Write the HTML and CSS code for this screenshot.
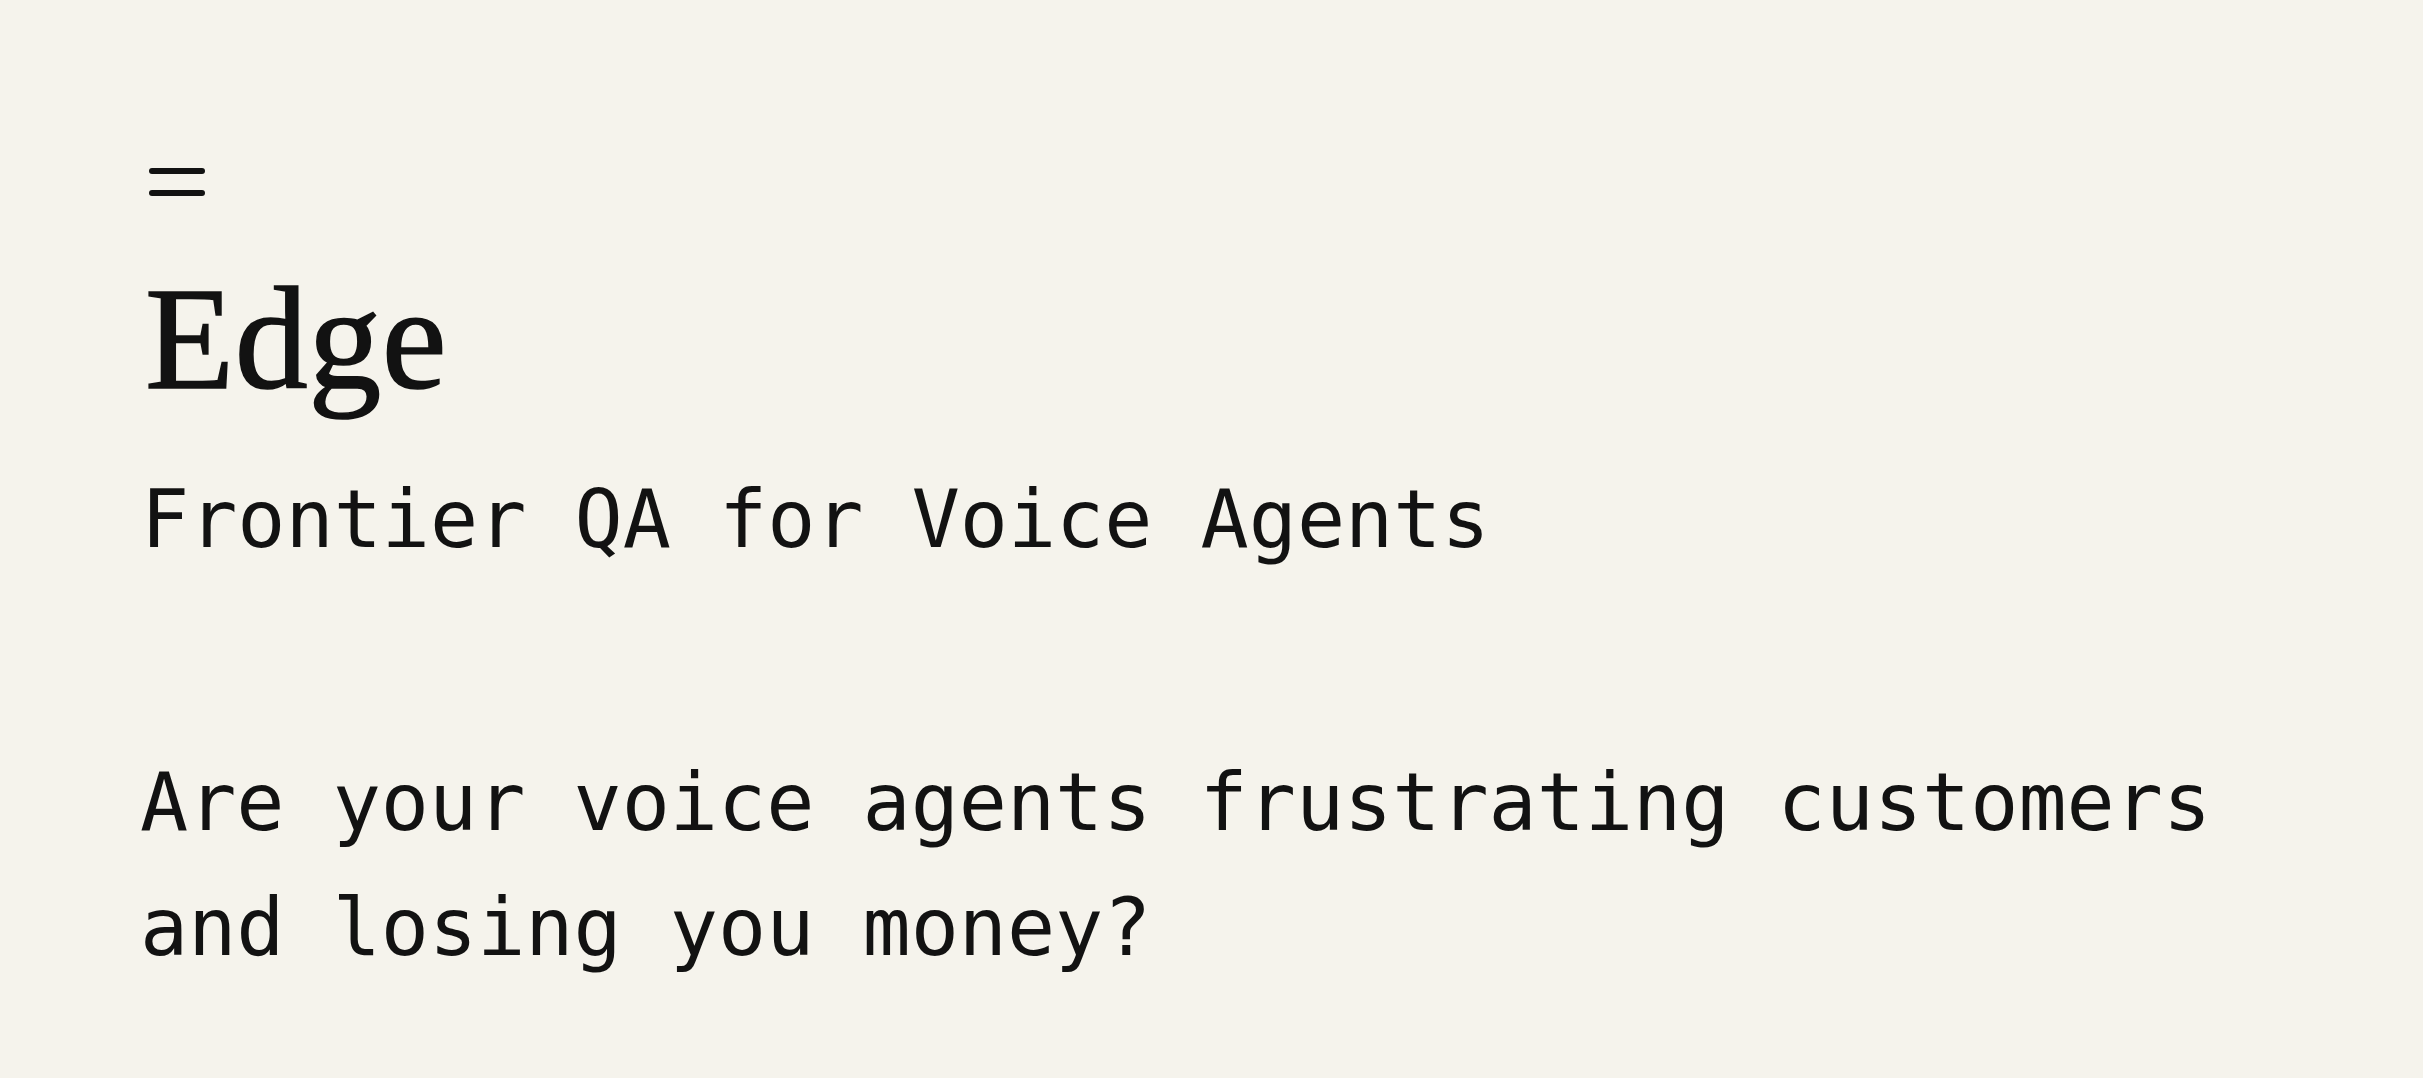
FILE: index.html
```html
<!DOCTYPE html>
<html lang="en">
<head>
<meta charset="utf-8">
<title>Edge</title>
<link rel="stylesheet" href="styles.css">
</head>
<body>
<main class="page">
  <button class="menu-btn" aria-label="Menu">
    <svg class="menu-icon" viewBox="0 0 56 32" width="56" height="32">
      <line x1="3" y1="5" x2="53" y2="5" />
      <line x1="3" y1="27" x2="53" y2="27" />
    </svg>
  </button>
  <h1 class="brand">Edge</h1>
  <p class="tagline">Frontier QA for Voice Agents</p>
  <p class="lead">Are your voice agents frustrating customers<br>and losing you money?</p>
</main>
</body>
</html>
```
FILE: styles.css
```css
html, body {
  margin: 0;
  padding: 0;
  background: #f5f3ec;
  color: #121212;
}

.page {
  padding: 166px 0 0 144px;
  display: flex;
  flex-direction: column;
  align-items: flex-start;
}

.menu-btn {
  background: none;
  border: 0;
  padding: 0;
  margin: 0 0 0 5px;
  display: block;
  line-height: 0;
}

.menu-icon line {
  stroke: #121212;
  stroke-width: 6;
  stroke-linecap: round;
}

.brand {
  font-family: "Liberation Serif", "Times New Roman", serif;
  font-weight: 400;
  font-size: 146px;
  line-height: 1;
  margin: 68px 0 0 1px;
  letter-spacing: 0.5px;
  -webkit-text-stroke: 1.6px #121212;
}

.tagline,
.lead {
  font-family: "DejaVu Sans Mono", "Liberation Mono", monospace;
  font-size: 80px;
  line-height: 125px;
  margin: 0 0 0 -4px;
  white-space: nowrap;
}

.tagline {
  margin-top: 45px;
  margin-left: -3px;
}

.lead {
  margin-top: 158px;
}
```
